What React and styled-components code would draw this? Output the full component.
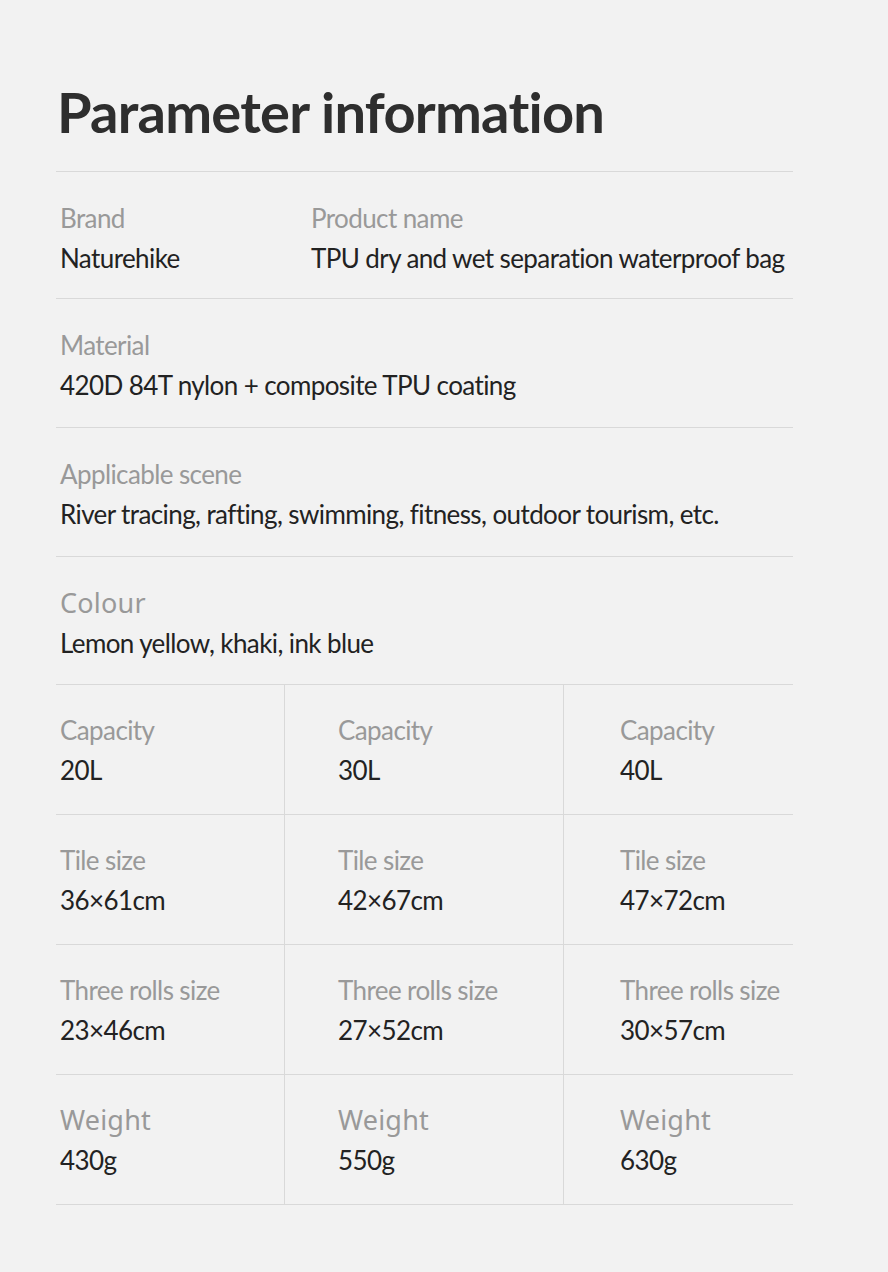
import styled, { createGlobalStyle } from 'styled-components'

const GlobalStyle = createGlobalStyle`
  html, body {
    margin: 0;
    padding: 0;
    background: #f2f2f2;
  }
  body {
    font-family: 'Lato', 'Liberation Sans', sans-serif;
  }
`

const Page = styled.div`
  min-height: 1272px;
  padding: 78px 95px 0 56px;
  box-sizing: border-box;
`

const Title = styled.h1`
  margin: 0 0 26px 1px;
  font-family: 'Lato', sans-serif;
  font-size: 56px;
  font-weight: 700;
  line-height: 1.2;
  letter-spacing: -0.75px;
  color: #2e2e2e;
`

// bottom padding differs a little from row to row in the original
const Row = styled.div`
  border-top: 1px solid #d9d9d9;
  padding: 26px 0 ${props => props.bottom ?? 22}px 4px;
  display: flex;
`

const Field = styled.div`
  display: flex;
  flex-direction: column;
  width: ${props => (props.width ? props.width + 'px' : 'auto')};
`

const Label = styled.div`
  font-family: ${props => (props.wide ? "'Noto Sans'" : "'Lato'")}, sans-serif;
  font-size: ${props => (props.wide ? 27 : 26)}px;
  line-height: 40px;
  letter-spacing: ${props => (props.wide ? '0.2px' : '-0.6px')};
  color: #999999;
`

const Value = styled.div`
  font-size: 26px;
  line-height: 40px;
  letter-spacing: -0.6px;
  color: #222222;
`

const Grid = styled.div`
  display: grid;
  grid-template-columns: 228px 279px 230px;
  border-bottom: 1px solid #d9d9d9;
`

const Cell = styled.div`
  border-top: 1px solid #d9d9d9;
  border-left: ${props => (props.first ? 'none' : '1px solid #d9d9d9')};
  padding: 25px 0 24px ${props => props.pad}px;
`

const sizes = [
  { label: 'Capacity', values: ['20L', '30L', '40L'] },
  { label: 'Tile size', values: ['36×61cm', '42×67cm', '47×72cm'] },
  { label: 'Three rolls size', values: ['23×46cm', '27×52cm', '30×57cm'] },
  { label: 'Weight', values: ['430g', '550g', '630g'], wide: true },
]

const pads = [4, 53, 56]

export default function App() {
  return (
    <>
      <GlobalStyle />
      <Page>
        <Title>Parameter information</Title>
        <Row bottom={20}>
          <Field width={251}>
            <Label>Brand</Label>
            <Value>Naturehike</Value>
          </Field>
          <Field>
            <Label>Product name</Label>
            <Value>TPU dry and wet separation waterproof bag</Value>
          </Field>
        </Row>
        <Row>
          <Field>
            <Label>Material</Label>
            <Value>420D 84T nylon + composite TPU coating</Value>
          </Field>
        </Row>
        <Row>
          <Field>
            <Label>Applicable scene</Label>
            <Value>River tracing, rafting, swimming, fitness, outdoor tourism, etc.</Value>
          </Field>
        </Row>
        <Row bottom={21}>
          <Field>
            <Label wide>Colour</Label>
            <Value>Lemon yellow, khaki, ink blue</Value>
          </Field>
        </Row>
        <Grid>
          {sizes.map(row =>
            row.values.map((v, i) => (
              <Cell key={row.label + i} first={i === 0} pad={pads[i]}>
                <Label wide={row.wide}>{row.label}</Label>
                <Value>{v}</Value>
              </Cell>
            ))
          )}
        </Grid>
      </Page>
    </>
  )
}
